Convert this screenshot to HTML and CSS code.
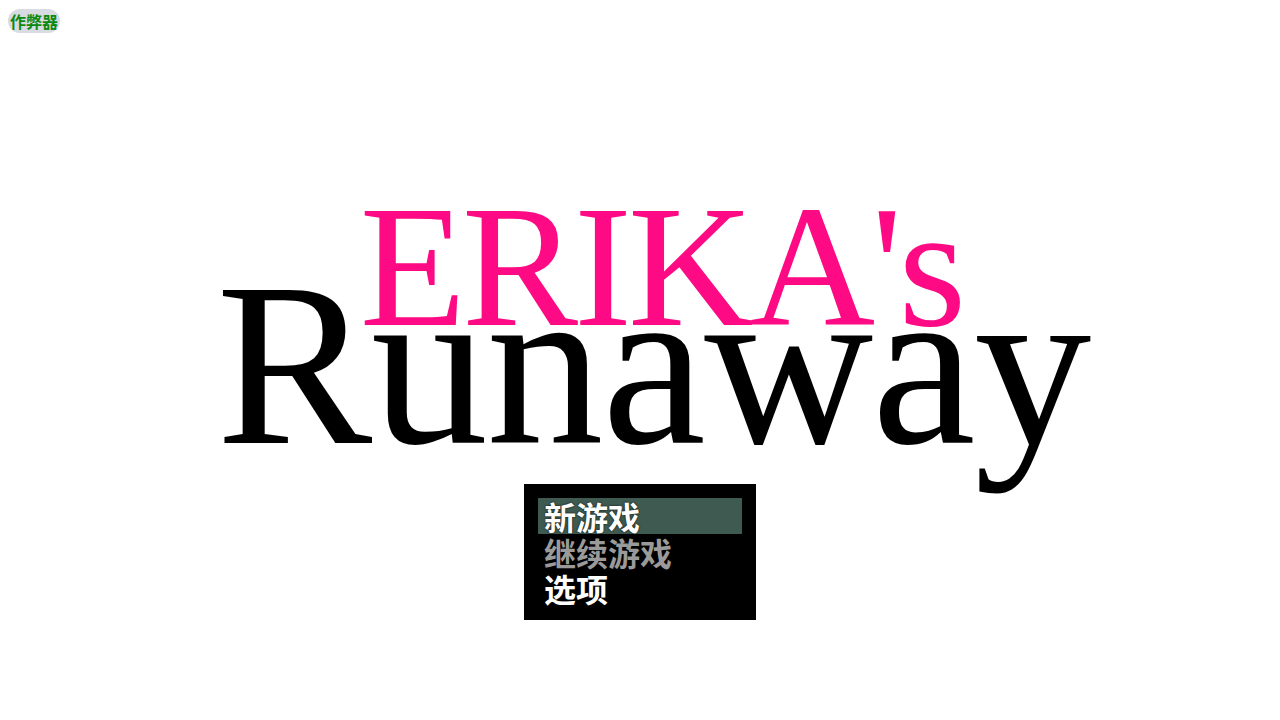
FILE: index.html
```html
<!DOCTYPE html>
<html lang="zh">
<head>
<meta charset="utf-8">
<title>ERIKA's Runaway</title>
<link rel="stylesheet" href="styles.css">
</head>
<body>
<button class="cheat">作弊器</button>
<main class="screen">
  <h1 class="title">
    <span class="title-top">ERIKA's</span>
    <span class="title-main">Runaway</span>
  </h1>
  <nav class="menu">
    <div class="item selected">新游戏</div>
    <div class="item disabled">继续游戏</div>
    <div class="item">选项</div>
  </nav>
</main>
</body>
</html>
```
FILE: styles.css
```css
html, body {
  margin: 0;
  padding: 0;
  width: 1280px;
  height: 720px;
  background: #ffffff;
  overflow: hidden;
}

.cheat {
  position: absolute;
  left: 8px;
  top: 9px;
  height: 24px;
  padding: 0 2px 0 2px;
  border: none;
  border-radius: 12px;
  background: #d9dbe2;
  color: #0b8a12;
  font-family: "Noto Sans CJK SC", sans-serif;
  font-weight: 700;
  font-size: 16px;
  line-height: 24px;
}

.screen {
  display: flex;
  flex-direction: column;
  align-items: center;
  padding-top: 217px;
}

.title {
  margin: 0;
  display: flex;
  flex-direction: column;
  align-items: center;
  font-family: "Liberation Serif", serif;
  font-weight: 400;
}

.title-top {
  display: block;
  font-size: 174px;
  line-height: 100px;
  height: 100px;
  letter-spacing: -4px;
  color: #fe0a84;
  padding-left: 42px;
}

.title-main {
  display: block;
  font-size: 234px;
  line-height: 94px;
  height: 94px;
  letter-spacing: -1.5px;
  color: #000000;
  padding-left: 26px;
}

.menu {
  margin-top: 73px;
  width: 204px;
  padding: 14px;
  background: #000000;
  display: flex;
  flex-direction: column;
}

.item {
  height: 36px;
  line-height: 36px;
  padding-left: 6px;
  font-family: "Noto Sans CJK SC", sans-serif;
  font-weight: 700;
  font-size: 32px;
  color: #ffffff;
  text-shadow: 0 0 2px #000;
}

.item.selected {
  background: #3e5a51;
}

.item.disabled {
  color: #9a9a9a;
}
```
